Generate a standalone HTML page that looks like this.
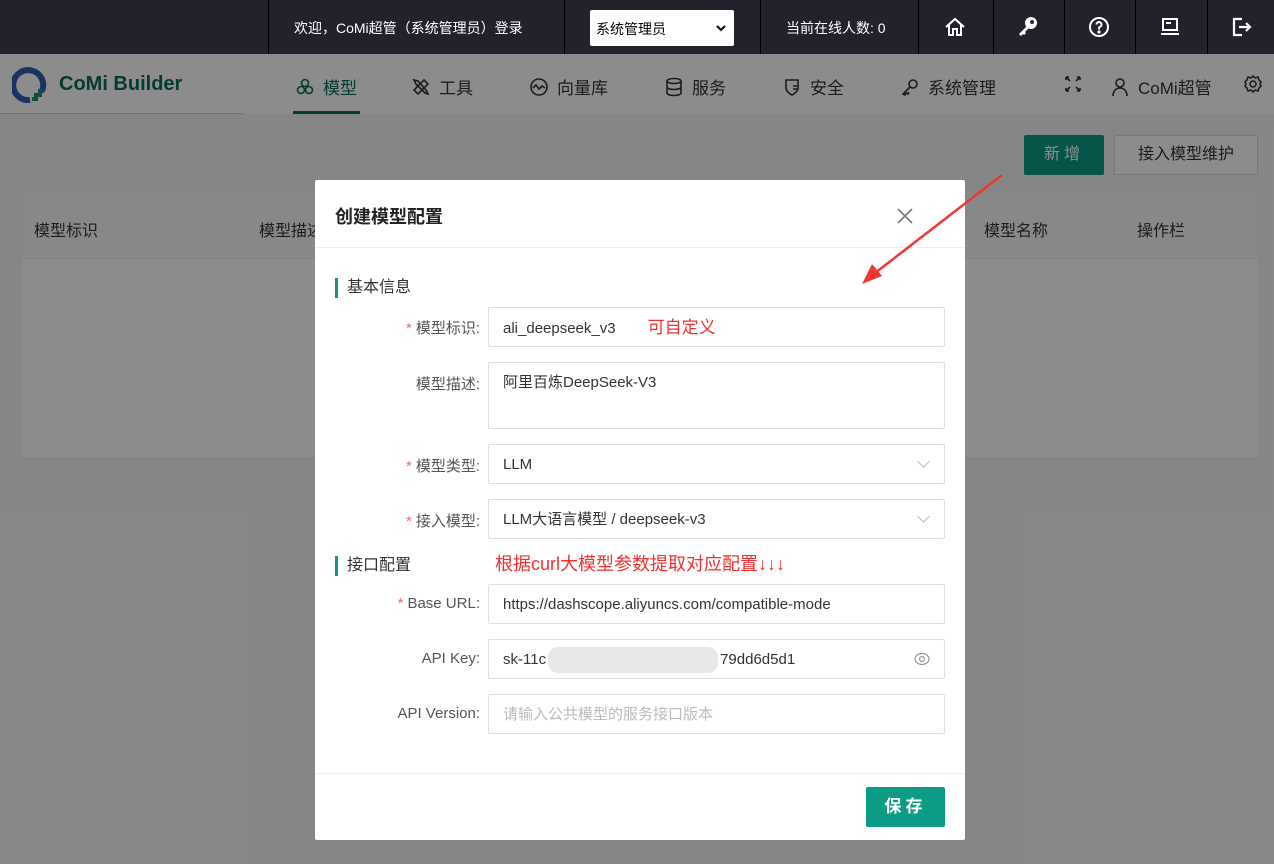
<!DOCTYPE html>
<html><head><meta charset="utf-8"><style>
*{box-sizing:border-box;margin:0;padding:0}
body{width:1274px;height:864px;overflow:hidden;position:relative;font-family:"Liberation Sans","Noto Sans CJK SC",sans-serif;background:#f5f5f5;color:#333}
.top{position:absolute;left:0;top:0;width:1274px;height:54px;background:#23212c;color:#fff;font-size:14px}
.top .d{position:absolute;top:0;height:54px;border-left:1px solid #000}
.top .t{position:absolute;top:18px}
.nav{position:absolute;top:54px;left:0;width:1274px;height:60px;background:#fff}
.nav .i{position:absolute;top:20px;font-size:17px;color:#333;display:flex;align-items:center;gap:8px}
.nav svg.ic{width:20px;height:20px;fill:none;stroke:#333;stroke-width:1.6}
.ov{position:absolute;left:0;top:54px;width:1274px;height:810px;background:rgba(0,0,0,0.45)}
.modal{position:absolute;left:315px;top:180px;width:650px;height:660px;background:#fff;border-radius:2px}
.lbl{position:absolute;width:165px;text-align:right;font-size:15px;color:#555;left:0}
.lbl b{color:#f56c6c;font-weight:normal;margin-right:4px}
.inp{position:absolute;left:173px;width:457px;height:40px;border:1px solid #dcdfe6;border-radius:2px;font-size:15px;padding:1px 14px 0;line-height:38px;color:#333}
.sec{position:absolute;left:20px;font-size:16px;color:#333;border-left:3px solid #1a9485;padding-left:9px;line-height:20px}
.red{color:#f23030}
.chev{position:absolute;right:16px;top:12px;width:9px;height:9px;border-right:1px solid #bbb;border-bottom:1px solid #bbb;transform:rotate(45deg)}
</style></head><body>
<div class="top">
<div class="d" style="left:268px"></div><div class="d" style="left:564px"></div><div class="d" style="left:760px"></div><div class="d" style="left:918px"></div><div class="d" style="left:993px"></div><div class="d" style="left:1064px"></div><div class="d" style="left:1135px"></div><div class="d" style="left:1207px"></div>
<div class="t" style="left:294px">欢迎，CoMi超管（系统管理员）登录</div>
<div style="position:absolute;left:590px;top:10px;width:144px;height:36px;background:#fff;border-radius:2px;color:#000;font-size:14px;padding:9px 6px">系统管理员<svg style="position:absolute;right:7px;top:13px" width="12" height="10" viewBox="0 0 12 10"><path d="M2 3l4 4 4-4" fill="none" stroke="#000" stroke-width="2"/></svg></div>
<div class="t" style="left:786px">当前在线人数: 0</div>
<svg style="position:absolute;left:943px;top:15px" width="24" height="24" viewBox="0 0 24 24" fill="none" stroke="#fff" stroke-width="2"><path d="M3 12L12 4l9 8M6 10v10h4v-6h4v6h4V10"/></svg>
<svg style="position:absolute;left:1016px;top:15px" width="24" height="24" viewBox="0 0 24 24" fill="#fff"><circle cx="15" cy="8" r="6"/><path d="M11 11L3 19l2 2 2-2 1 1 2-2-1-1 4-4z"/><circle cx="16" cy="7" r="2" fill="#23212c"/></svg>
<svg style="position:absolute;left:1087px;top:15px" width="24" height="24" viewBox="0 0 24 24" fill="none" stroke="#fff" stroke-width="2"><circle cx="12" cy="12" r="9"/><path d="M9.5 9.5a2.5 2.5 0 1 1 3.5 2.3c-.7.3-1 1-1 1.7v1"/><circle cx="12" cy="17" r=".6" fill="#fff"/></svg>
<svg style="position:absolute;left:1158px;top:15px" width="24" height="24" viewBox="0 0 24 24" fill="none" stroke="#fff" stroke-width="2"><rect x="5" y="4" width="14" height="11"/><path d="M3 19h18M8 8h5"/></svg>
<svg style="position:absolute;left:1229px;top:15px" width="24" height="24" viewBox="0 0 24 24" fill="none" stroke="#fff" stroke-width="2.2"><path d="M13 4H5v16h8M10 12h11M17 8l4 4-4 4"/></svg>
</div>
<div class="nav">
<svg style="position:absolute;left:12px;top:13px" width="36" height="36" viewBox="0 0 36 36"><path d="M30 24A15 15 0 1 0 18 33" fill="none" stroke="#2f5fb0" stroke-width="6"/><path d="M20 32h4v-4h4v-4h4" fill="none" stroke="#1e8a76" stroke-width="4"/></svg>
<div style="position:absolute;left:59px;top:19px;font-size:20px;font-weight:bold;color:#0e6b5a">CoMi Builder</div>
<div style="position:absolute;left:0;top:59px;width:243px;border-top:1px solid #ccc"></div>
<div class="i" style="left:295px;color:#0e6b5a"><svg class="ic" viewBox="0 0 20 20" style="stroke:#0e6b5a"><circle cx="10" cy="6" r="3.5"/><circle cx="6" cy="13" r="3.5"/><circle cx="14" cy="13" r="3.5"/></svg>模型</div>
<div style="position:absolute;left:293px;top:57px;width:67px;height:3px;background:#0e6b5a"></div>
<div class="i" style="left:411px"><svg class="ic" viewBox="0 0 20 20"><path d="M3 3l4 1 8 9 2 4-3-1-9-9zM13 3l4 4-10 10-4-4z"/></svg>工具</div>
<div class="i" style="left:529px"><svg class="ic" viewBox="0 0 20 20"><circle cx="10" cy="10" r="8"/><path d="M4 11l3-3 3 4 3-3 3 2"/></svg>向量库</div>
<div class="i" style="left:664px"><svg class="ic" viewBox="0 0 20 20"><ellipse cx="10" cy="4" rx="7" ry="2.5"/><path d="M3 4v12c0 1.4 3 2.5 7 2.5s7-1.1 7-2.5V4M3 10c0 1.4 3 2.5 7 2.5s7-1.1 7-2.5"/></svg>服务</div>
<div class="i" style="left:782px"><svg class="ic" viewBox="0 0 20 20"><path d="M4 3h12v8c0 4-6 7-6 7s-6-3-6-7z M11 9h4M11 12h4"/></svg>安全</div>
<div class="i" style="left:900px"><svg class="ic" viewBox="0 0 20 20"><circle cx="13" cy="7" r="4"/><path d="M10 10l-7 7 2 1 1-2 2 1 1-2"/></svg>系统管理</div>
<div class="i" style="left:1063px"><svg class="ic" viewBox="0 0 20 20"><path d="M3 3l4 4M3 3v3M3 3h3M17 3l-4 4M17 3v3M17 3h-3M3 17l4-4M3 17v-3M3 17h3M17 17l-4-4M17 17v-3M17 17h-3"/></svg></div>
<div class="i" style="left:1110px"><svg class="ic" viewBox="0 0 20 20"><circle cx="10" cy="6" r="4"/><path d="M3 19c0-5 3-8 7-8s7 3 7 8"/></svg>CoMi超管</div>
<div class="i" style="left:1243px"><svg class="ic" viewBox="0 0 20 20"><circle cx="10" cy="10" r="3"/><path d="M10 2l2 2 3-1 1 3 2 2-1 2 1 2-2 2-1 3-3-1-2 2-2-2-3 1-1-3-2-2 1-2-1-2 2-2 1-3 3 1z"/></svg></div>
</div>
<div style="position:absolute;left:1024px;top:135px;width:80px;height:40px;background:#0c9c85;border-radius:2px;color:#fff;font-size:16px;text-align:center;line-height:40px;letter-spacing:4px">新增</div>
<div style="position:absolute;left:1114px;top:135px;width:144px;height:40px;background:#fff;border:1px solid #ddd;border-radius:2px;font-size:16px;text-align:center;line-height:38px">接入模型维护</div>
<div style="position:absolute;left:22px;top:193px;width:1236px;height:264px;background:#fff">
<div style="height:66px;background:#f8f8f8;border-bottom:1px solid #eee;position:relative;font-size:16px">
<span style="position:absolute;left:12px;top:24px">模型标识</span><span style="position:absolute;left:237px;top:24px">模型描述</span><span style="position:absolute;left:962px;top:24px">模型名称</span><span style="position:absolute;left:1115px;top:24px">操作栏</span></div>
</div>
<div class="ov"></div>
<div class="modal">
<div style="height:68px;border-bottom:1px solid #eee;position:relative"><div style="position:absolute;left:20px;top:23px;font-size:18px;font-weight:bold;color:#222">创建模型配置</div><svg style="position:absolute;left:581px;top:27px" width="18" height="18" viewBox="0 0 18 18"><path d="M2 2l14 14M16 2L2 16" stroke="#777" stroke-width="1.6"/></svg></div>
<div class="sec" style="top:98px">基本信息</div>
<div class="lbl" style="top:137px"><b>*</b>模型标识:</div>
<div class="inp" style="top:127px">ali_deepseek_v3<span class="red" style="margin-left:32px;font-size:17px">可自定义</span></div>
<div class="lbl" style="top:193px">模型描述:</div>
<div class="inp" style="top:182px;height:67px;line-height:1;padding-top:12px">阿里百炼DeepSeek-V3</div>
<div class="lbl" style="top:275px"><b>*</b>模型类型:</div>
<div class="inp" style="top:264px">LLM<span class="chev"></span></div>
<div class="lbl" style="top:330px"><b>*</b>接入模型:</div>
<div class="inp" style="top:319px">LLM大语言模型 / deepseek-v3<span class="chev"></span></div>
<div class="sec" style="top:376px">接口配置</div>
<div class="red" style="position:absolute;left:180px;top:370px;font-size:18px">根据curl大模型参数提取对应配置↓↓↓</div>
<div class="lbl" style="top:415px"><b>*</b>Base URL:</div>
<div class="inp" style="top:404px">https://dashscope.aliyuncs.com/compatible-mode</div>
<div class="lbl" style="top:470px">API Key:</div>
<div class="inp" style="top:459px">sk-11c<span style="display:inline-block;width:170px;height:26px;background:#e8e8e8;vertical-align:middle;border-radius:10px;margin:0 2px"></span>79dd6d5d1<svg style="position:absolute;right:14px;top:12px" width="16" height="14" viewBox="0 0 16 14"><ellipse cx="8" cy="7" rx="7" ry="5.5" fill="none" stroke="#999" stroke-width="1.2"/><circle cx="8" cy="7" r="2.5" fill="none" stroke="#999" stroke-width="1.2"/></svg></div>
<div class="lbl" style="top:525px">API Version:</div>
<div class="inp" style="top:514px;color:#bbb">请输入公共模型的服务接口版本</div>
<div style="position:absolute;left:0;top:593px;width:650px;border-top:1px solid #eee"></div>
<div style="position:absolute;left:551px;top:607px;width:79px;height:40px;background:#0c9c85;border-radius:2px;color:#fff;font-size:17px;text-align:center;line-height:40px;letter-spacing:4px;font-weight:bold">保存</div>
</div>
<svg style="position:absolute;left:0;top:0" width="1274" height="864"><path d="M1002 175L875 273" stroke="#f03535" stroke-width="2.5"/><path d="M862 284l10-20 10 12z" fill="#f03535"/></svg>
</body></html>
